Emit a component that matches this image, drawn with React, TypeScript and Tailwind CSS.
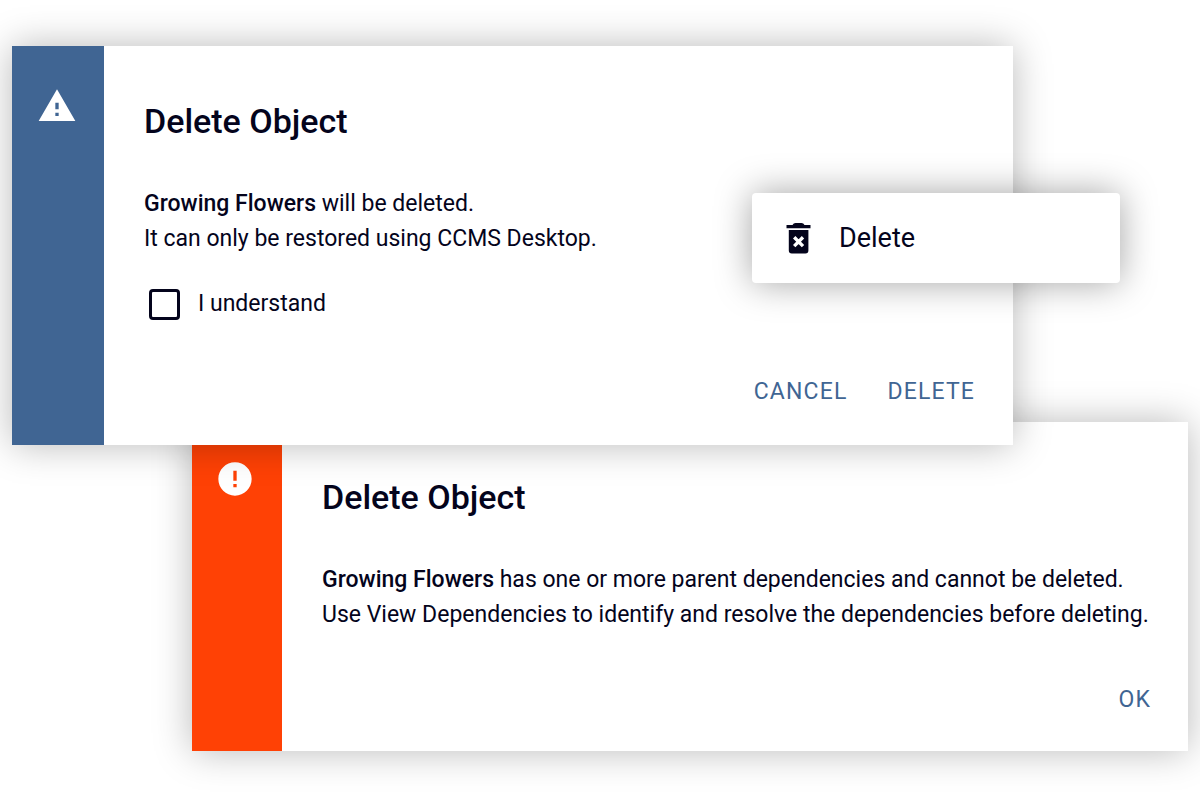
import { ReactNode } from "react";
import clsx from "clsx";
import { MdError, MdWarning } from "react-icons/md";

export default function App() {
  return (
    <main className="flex min-h-screen flex-col overflow-hidden bg-white pt-[46px] font-[Roboto,sans-serif] text-[#04041c]">
      <div className="relative z-10 mr-[187px] ml-3">
        <DialogCard
          id="confirm-delete"
          icon={<MdWarning className="size-10" />}
          stripClassName="w-[92px] bg-[#406593] pt-10 pl-[25px]"
        >
          <p className="mt-11 text-[23px] leading-[35px]">
            <b className="font-medium">Growing Flowers</b> will be deleted.
            <br />
            It can only be restored using CCMS Desktop.
          </p>
          <label className="mt-8 flex items-center gap-[18px] pl-[5px] text-[23px] leading-8">
            <input
              type="checkbox"
              className="size-[31px] appearance-none rounded-sm border-3 border-[#04041c] checked:bg-[#04041c]"
            />
            I understand
          </label>
          <div className="mt-14 flex justify-end gap-10 pr-[38px] pb-[37px]">
            <TextButton>CANCEL</TextButton>
            <TextButton>DELETE</TextButton>
          </div>
        </DialogCard>
        <DeleteMenu />
      </div>

      <div className="-mt-[23px] mr-3 ml-48">
        <DialogCard
          id="delete-blocked"
          icon={<MdError className="size-10" />}
          stripClassName="w-[90px] bg-[#ff4105] pt-[37px] pl-[23px]"
        >
          <p className="mt-11 text-[23px] leading-[35px]">
            <b className="font-medium">Growing Flowers</b> has one or more
            parent dependencies and cannot be deleted.
            <br />
            Use View Dependencies to identify and resolve the dependencies
            before deleting.
          </p>
          <div className="mt-[52px] flex justify-end pr-[37px] pb-[35px]">
            <TextButton>OK</TextButton>
          </div>
        </DialogCard>
      </div>
    </main>
  );
}

type DialogCardProps = {
  id: string;
  icon: ReactNode;
  stripClassName: string;
  children: ReactNode;
};

const DialogCard = ({ id, icon, stripClassName, children }: DialogCardProps) => {
  return (
    <section
      role="dialog"
      aria-labelledby={id}
      className="flex bg-white shadow-[0_0_36px_rgba(0,0,0,0.28)]"
    >
      <div className={clsx("shrink-0 text-white", stripClassName)}>{icon}</div>
      <div className="flex-1 pt-[55px] pl-10">
        <h2 id={id} className="text-[34px] leading-[41px] font-medium">
          Delete Object
        </h2>
        {children}
      </div>
    </section>
  );
};

const TextButton = ({ children }: { children: ReactNode }) => {
  return (
    <button
      type="button"
      className="cursor-pointer text-[23px] leading-8 tracking-wider text-[#406593]"
    >
      {children}
    </button>
  );
};

const DeleteMenu = () => {
  return (
    <div
      role="menu"
      className="absolute top-[147px] -right-[107px] w-[368px] rounded-sm bg-white shadow-[0_0_36px_rgba(0,0,0,0.36)]"
    >
      <button
        type="button"
        role="menuitem"
        className="flex h-[90px] w-full cursor-pointer items-center gap-7 pl-[34px] text-[27px] leading-8"
      >
        <TrashIcon />
        Delete
      </button>
    </div>
  );
};

const TrashIcon = () => {
  return (
    <svg width="25" height="31" viewBox="0 0 25 31" aria-hidden="true">
      <path
        fill="currentColor"
        d="M.5 2H6.500Q7.500 0 9.500 0h6q2 0 3 2h6v3.300H.5zM2.800 7h19.600v20.500q0 3-3 3H5.800q-3 0-3-3z"
      />
      <path
        d="M8.200 14.300l8.800 8.800M17 14.300l-8.800 8.800"
        stroke="white"
        strokeWidth="3.400"
      />
    </svg>
  );
};
